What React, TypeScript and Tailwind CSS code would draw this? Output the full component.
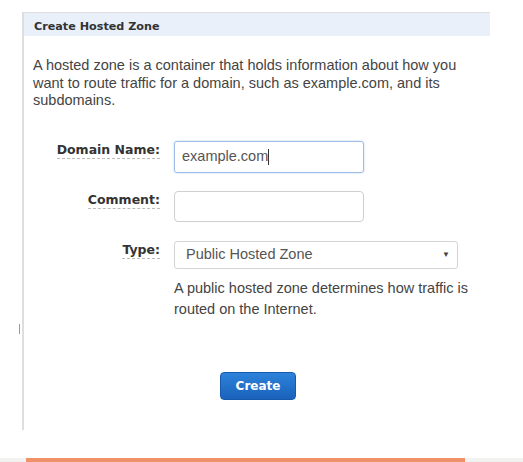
import React from "react";

const sans = "font-['Liberation_Sans',Arial,sans-serif]";
const verdana = "font-['DejaVu_Sans',Verdana,sans-serif]";

function FieldLabel({ children }: { children: React.ReactNode }) {
  return (
    <div className="w-[136px] flex justify-end pt-[2px]">
      <span
        className={`${verdana} text-[12.5px] font-bold text-[#333] leading-[14px] pb-[1px] border-b border-dashed border-[#bbb]`}
      >
        {children}
      </span>
    </div>
  );
}

export default function App() {
  return (
    <div className="w-full h-[462px] bg-white flex flex-col relative overflow-hidden">
      <div className="pt-[12px] pl-[22px]">
        <div className="w-[468px] h-[418px] border-l-2 border-t border-[#dedede] flex flex-col">
          <div
            className={`${verdana} h-[23px] bg-[#e9f0fa] pl-[10px] pt-[7px] text-[11.2px] leading-[13px] font-bold text-[#333]`}
          >
            Create Hosted Zone
          </div>

          <p className={`${sans} mt-[21px] pl-[9px] w-[450px] text-[14.5px] leading-[17.5px] text-[#444]`}>
            A hosted zone is a container that holds information about how you want to route
            traffic for a domain, such as example.com, and its subdomains.
          </p>

          <div className="mt-[31px] flex flex-col">
            <div className="flex items-start gap-[14px]">
              <FieldLabel>Domain Name:</FieldLabel>
              <div
                className={`${sans} w-[190px] h-[32px] rounded-[3px] border border-[#9dbde6] shadow-[0_0_2px_rgba(80,140,220,0.45)] flex items-center pl-[7px] text-[14.5px] text-[#555]`}
              >
                example.com
                <span className="w-px h-[16px] bg-[#333]" />
              </div>
            </div>

            <div className="mt-[18px] flex items-start gap-[14px]">
              <FieldLabel>Comment:</FieldLabel>
              <div className="w-[190px] h-[31px] rounded-[4px] border border-[#cfcfcf]" />
            </div>

            <div className="mt-[19px] flex items-start gap-[14px]">
              <FieldLabel>Type:</FieldLabel>
              <div className="flex flex-col">
                <div
                  className={`${sans} w-[284px] h-[28px] rounded-[3px] border border-[#d4d4d4] flex items-center justify-between pl-[11px] pr-[7px] text-[14.5px] text-[#555]`}
                >
                  <span>Public Hosted Zone</span>
                  <span className="text-[8px] text-[#444]">▼</span>
                </div>
                <p className={`${sans} mt-[9px] w-[310px] text-[14.5px] leading-[21px] text-[#444]`}>
                  A public hosted zone determines how traffic is routed on the Internet.
                </p>
              </div>
            </div>
          </div>

          <div className="mt-[52px] flex justify-center pl-[2px]">
            <button
              className={`${verdana} w-[76px] h-[28px] rounded-[4px] border border-[#1659ad] bg-gradient-to-b from-[#2d82da] to-[#1a62bb] text-white text-[12px] font-bold`}
            >
              Create
            </button>
          </div>
        </div>
      </div>

      <div className="absolute left-[19px] top-[324px] w-px h-[10px] bg-[#999]" />

      <div className="mt-[28px] h-[4px] bg-[#f2f2f0]">
        <div className="ml-[26px] w-[439px] h-full bg-[#f0916a]" />
      </div>
    </div>
  );
}
